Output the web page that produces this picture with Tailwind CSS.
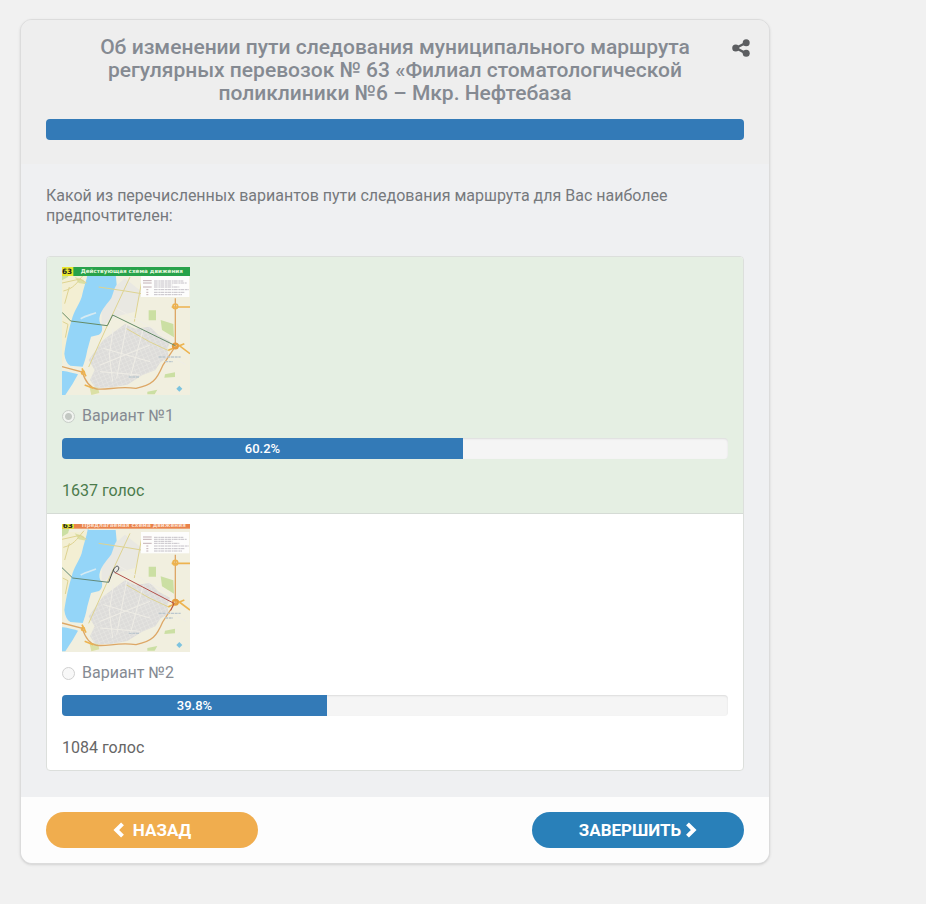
<!DOCTYPE html>
<html lang="ru">
<head>
    <meta charset="UTF-8">
    <meta name="viewport" content="width=device-width, initial-scale=1.0">
    <title>Опрос - маршрут № 63</title>
    <script src="https://cdn.jsdelivr.net/npm/@tailwindcss/browser@4"></script>
</head>
<body class="bg-[#f1f1f1] font-['Roboto','Liberation_Sans',sans-serif] text-base leading-5 text-[#666]">
    <form class="mx-5 mt-[19px] mb-10 max-w-[750px] overflow-hidden rounded-xl border border-[#dcdcdc] bg-[#eff0f2] shadow-sm">
        <!-- Header -->
        <header class="bg-[#eee] pt-4 pb-6">
            <div class="grid grid-cols-[18px_1fr_18px] px-[19px]">
                <h1 class="col-start-2 px-8 text-center text-[21px] leading-[23px] font-medium text-[#858a92]">Об изменении пути следования муниципального маршрута регулярных перевозок № 63 «Филиал стоматологической поликлиники №6 – Мкр. Нефтебаза</h1>
                <button type="button" aria-label="Поделиться" class="mt-[3px] h-[18px] w-[18px] text-[#5c5e61]">
                    <svg viewBox="0 0 18 18" class="h-[18px] w-[18px]" fill="currentColor">
                        <path d="M14 3.800 4 9l10 5.400" fill="none" stroke="currentColor" stroke-width="2.4"/>
                        <circle cx="3.700" cy="9" r="3.500"/>
                        <circle cx="14.200" cy="3.800" r="3.500"/>
                        <circle cx="14.200" cy="14.200" r="3.500"/>
                    </svg>
                </button>
            </div>
            <div class="mx-[25px] mt-[14px] h-[21px] rounded bg-[#337ab7]"></div>
        </header>

        <!-- Question -->
        <main class="px-[25px] pt-[22px] pb-[26px]">
            <p id="question" class="text-[#76797d]">Какой из перечисленных вариантов пути следования маршрута для Вас наиболее предпочтителен:</p>

            <ul role="radiogroup" aria-labelledby="question" class="mt-[30px] overflow-hidden rounded border border-[#dcdfdc] bg-white">
                <li class="border-b border-[#d5dbd5] bg-[#e5efe3] px-[15px] pt-[10px] pb-3">
                    <svg viewBox="36 36 384 384" class="block h-32 w-32" role="img" aria-label="Действующая схема движения">
                        <defs>
                            <pattern id="blocks" width="13" height="11" patternUnits="userSpaceOnUse" patternTransform="rotate(-24)">
                                <path d="M0 0h13M0 0v11" stroke="#e9e8e4" stroke-width="3"/>
                            </pattern>
                            <g id="city">
                                <rect x="36" y="30" width="384" height="392" fill="#f1efdf"/>
                                <path d="M36 62h76L62 240 46 300l-10 30z" fill="#f3efd3"/>
                                <path d="M155 130l70-60 50 40-20 60-60 15-40 30z" fill="#e9e8e2"/>
                                <path d="M160 255l35-26 30-22 30 14 45-6 26 26 34 18-8 24 4 24-24 14-16 24-40 16-44 28-46 8-50 2-16-24 14-30-18-30z" fill="#dddcda"/>
                                <path d="M160 255l35-26 30-22 30 14 45-6 26 26 34 18-8 24 4 24-24 14-16 24-40 16-44 28-46 8-50 2-16-24 14-30-18-30z" fill="url(#blocks)"/>
                                <path d="M296 166h22v30h-22zM332 195l38 12 2 40-36-22zM345 358l30-6v14l-32 2zM292 410l30-6-8 14h-22zM36 40h26l-8 26-18 10z" fill="#cbdfa3"/>
                                <path d="M74 66l26 8 8 14-22-4zM118 394l26 4 4 16-24 6z" fill="#dbe0a5"/>
                                <path d="M114 50c-4 26-14 50-19 76-8 25-24 42-30 70-9 28-16 60-22 100 2 18 8 30 18 36l37 3c8-18 12-39 14-50l11-40 24-6c9-6 11-15 9-26-8-8-10-20-6-32 6-20 22-34 34-52 6-14 8-30 16-40l-3-33H116zM36 348c12 0 26 4 48 10l-16 28-22 34H36z" fill="#94d5f8"/>
                                <path d="M92 191c14-8 30-12 46-18" fill="none" stroke="#d6eaf2" stroke-width="5"/>
                                <g fill="none">
                                    <path d="M102 58c-24 28-30 42-62 50M36 84l54-12 20 12M44 146l14-50M38 200l16 8-8 40M146 96l80 12 60 10M240 66l-70 150-54 120M275 80l-22 120M228 220l70 40 60 28" stroke="#ded391" stroke-width="3"/>
                                    <path d="M190 220l-12 80 10 80M230 210l-30 160M280 220l-40 150M150 330l150-60M160 280l140 40M150 350l120 10M200 160l180 100M380 160h40M360 300l48 30" stroke="#efede6" stroke-width="3"/>
                                    <path d="M376 130v144l-38 58c-18 42-30 58-80 68-54-8-84 6-118 2-20-4-34-22-43-51l-61-16" stroke="#dda766" stroke-width="4"/>
                                    <path d="M365 156h55M380 266l40 30M355 286l48-20M96 340l12 24M104 390l26 10" stroke="#edb34f" stroke-width="5"/>
                                    <circle cx="376" cy="154" r="7" stroke="#edb34f" stroke-width="5"/>
                                    <circle cx="376" cy="273" r="7" stroke="#e59c3e" stroke-width="7"/>
                                    <circle cx="99" cy="353" r="5" stroke="#edb34f" stroke-width="4"/>
                                </g>
                                <path d="M326 306h20M352 306h40M345 320h24M236 366h32" stroke="#bcc7cd" stroke-width="4" stroke-dasharray="9 2"/>
                                <path d="M388 392l9 9-9 9-9-9z" fill="#7dc3df"/>
                                <rect x="273" y="62" width="145" height="64" fill="#fdfdfc"/>
                                <path d="M312 78h88M312 84h98M312 90h55M312 96h76M312 104h104M312 112h92M312 119h84" stroke="#a9a5ad" stroke-width="2" stroke-dasharray="11 2 6 1"/>
                                <path d="M279 77h26M279 84h26M279 96h26M289 104h6M289 112h6M289 119h6" stroke="#a88d93" stroke-width="2"/>
                            </g>
                        </defs>
                        <use href="#city"/>
                        <path d="M36 172l26 26 110 14 16-32 188 92" fill="none" stroke="#638a66" stroke-width="3"/>
                        <rect x="36" y="36" width="384" height="27" fill="#27a24a"/>
                        <rect x="36" y="36" width="34" height="27" fill="#e8e72c"/>
                        <text x="36" y="58" font-family="DejaVu Sans" font-weight="700" font-size="22" fill="#222">63</text>
                        <text x="92" y="55" font-family="DejaVu Sans" font-weight="700" font-size="17" fill="#e5f7df">Действующая схема движения</text>
                    </svg>
                    <label class="mt-[11px] flex items-center gap-[7px] text-[#858a92]">
                        <input type="radio" name="variant" value="1" checked disabled class="h-[13px] w-[13px] appearance-none rounded-full border border-[#c8cec8] bg-[#f1f4f0] bg-[radial-gradient(circle,#c3c8c3_0_3px,transparent_4px)]">
                        Вариант №1
                    </label>
                    <div class="mt-3 h-[21px] overflow-hidden rounded bg-[#f5f5f5] shadow-[inset_0_1px_2px_rgba(0,0,0,0.1)]">
                        <div class="h-full bg-[#337ab7] text-center text-[13px] leading-[21px] font-medium text-white" style="width: 60.2%">60.2%</div>
                    </div>
                    <p class="mt-[22px] text-[#4b7b4c]">1637 голос</p>
                </li>
                <li class="px-[15px] pt-[10px] pb-3">
                    <svg viewBox="36 33 384 384" class="block h-32 w-32" role="img" aria-label="Предлагаемая схема движения">
                        <use href="#city" y="-5"/>
                        <path d="M36 164l32 31 108 13" fill="none" stroke="#638a7a" stroke-width="3"/>
                        <path d="M176 208l12-32c4-12 12-20 17-15 4 6-2 13-8 18-6-2-7-6-6-10" fill="none" stroke="#454b50" stroke-width="3"/>
                        <path d="M194 178l178 93-10 22" fill="none" stroke="#b3514b" stroke-width="3"/>
                        <rect x="36" y="33" width="384" height="14" fill="#e9834b"/>
                        <rect x="36" y="33" width="36" height="14" fill="#dfe033"/>
                        <text x="38" y="46" font-family="DejaVu Sans" font-weight="700" font-size="22" fill="#222">63</text>
                        <text x="95" y="42" font-family="DejaVu Sans" font-weight="700" font-size="17" fill="#fbdcc8">Предлагаемая схема движения</text>
                    </svg>
                    <label class="mt-[11px] flex items-center gap-[7px] text-[#858a92]">
                        <input type="radio" name="variant" value="2" disabled class="h-[13px] w-[13px] appearance-none rounded-full border border-[#d0d0d0] bg-[#f8f8f8]">
                        Вариант №2
                    </label>
                    <div class="mt-3 h-[21px] overflow-hidden rounded bg-[#f5f5f5] shadow-[inset_0_1px_2px_rgba(0,0,0,0.1)]">
                        <div class="h-full bg-[#337ab7] text-center text-[13px] leading-[21px] font-medium text-white" style="width: 39.8%">39.8%</div>
                    </div>
                    <p class="mt-[22px] text-[#666]">1084 голос</p>
                </li>
            </ul>
        </main>

        <!-- Buttons -->
        <footer class="flex justify-between bg-[#fdfdfd] px-[25px] py-[15px]">
            <button type="button" class="flex h-9 w-[212px] items-center justify-center gap-2 rounded-full bg-[#f0ad4e] text-[17px] font-bold text-white">
                <svg viewBox="0 0 12 16" class="h-4 w-3" fill="none" stroke="currentColor" stroke-width="4"><path d="M9.500 1.800 3.300 8l6.200 6.200"/></svg>
                НАЗАД
            </button>
            <button type="submit" class="flex h-9 w-[212px] items-center justify-center gap-1 rounded-full bg-[#2980b9] text-[17px] font-bold text-white">
                ЗАВЕРШИТЬ
                <svg viewBox="0 0 12 16" class="h-4 w-3" fill="none" stroke="currentColor" stroke-width="4"><path d="M2.500 1.800 8.700 8l-6.200 6.200"/></svg>
            </button>
        </footer>
    </form>
</body>
</html>
